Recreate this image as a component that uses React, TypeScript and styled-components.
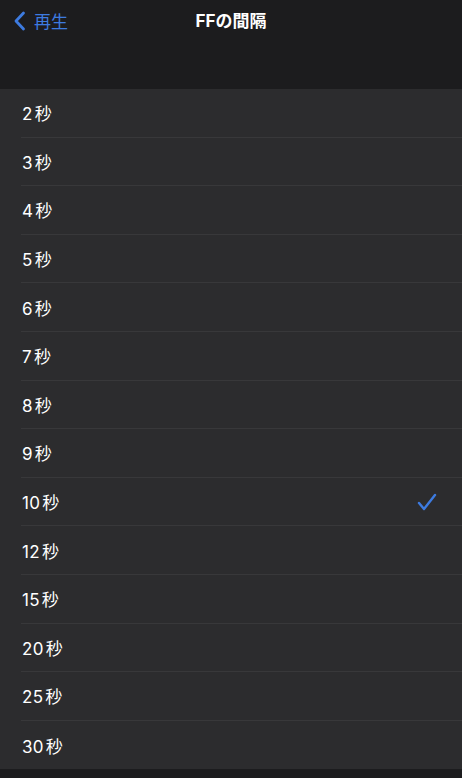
import React from "react";
import styled, { createGlobalStyle } from "styled-components";

const Global = createGlobalStyle`
  html, body { margin: 0; padding: 0; background: #1c1c1e; }
  body { font-family: "Inter", "Noto Sans CJK JP", sans-serif; -webkit-font-smoothing: antialiased; }
`;

const Screen = styled.div`
  width: 462px;
  height: 778px;
  background: #1c1c1e;
  display: flex;
  flex-direction: column;
  overflow: hidden;
`;

const NavBar = styled.header`
  height: 89px;
  flex-shrink: 0;
  display: grid;
  grid-template-columns: 1fr auto 1fr;
  align-items: start;
  padding-top: 10px;
  box-sizing: border-box;
`;

const BackButton = styled.div`
  display: flex;
  align-items: center;
  gap: 8px;
  padding-left: 13px;
  color: #3d7be0;
  font-size: 17px;
  line-height: 22px;
  font-family: "Noto Sans CJK JP", sans-serif;
`;

const Title = styled.h1`
  margin: 0;
  color: #fff;
  font-size: 17px;
  line-height: 22px;
  font-weight: 700;
  font-family: "Inter", "Noto Sans CJK JP", sans-serif;
`;

const List = styled.ul`
  list-style: none;
  margin: 0;
  padding: 0;
  background: #2c2c2e;
`;

const Row = styled.li<{ $last?: boolean }>`
  height: 48.6px;
  box-sizing: border-box;
  margin-left: 21px;
  padding-right: 25px;
  display: flex;
  align-items: center;
  justify-content: space-between;
  border-bottom: ${(p) => (p.$last ? "none" : "1px solid #38383a")};
  color: #fff;
  font-size: 17px;
  font-family: "Inter", "Noto Sans CJK JP", sans-serif;
`;

const Label = styled.span`
  display: flex;
  align-items: baseline;
  gap: 2px;
  padding-left: 1px;
  letter-spacing: 0.3px;
`;

const Chevron = () => (
  <svg width="13" height="20" viewBox="0 0 13 20" fill="none">
    <path d="M10.5 2 L3 10 L10.5 18" stroke="#3d7be0" strokeWidth="2.8" strokeLinecap="round" strokeLinejoin="round" />
  </svg>
);

const Check = () => (
  <svg width="20" height="18" viewBox="0 0 20 18" fill="none">
    <path d="M2 10 L7 16 L18 2" stroke="#3d7be0" strokeWidth="2.4" strokeLinecap="round" strokeLinejoin="round" />
  </svg>
);

const values = [2, 3, 4, 5, 6, 7, 8, 9, 10, 12, 15, 20, 25, 30];
const selected = 10;

export default function App() {
  return (
    <Screen>
      <Global />
      <NavBar>
        <BackButton>
          <Chevron />
          <span>再生</span>
        </BackButton>
        <Title>FFの間隔</Title>
        <div />
      </NavBar>
      <List>
        {values.map((v, i) => (
          <Row key={v} $last={i === values.length - 1}>
            <Label>
              <span>{v}</span>
              <span>秒</span>
            </Label>
            {v === selected && <Check />}
          </Row>
        ))}
      </List>
    </Screen>
  );
}
